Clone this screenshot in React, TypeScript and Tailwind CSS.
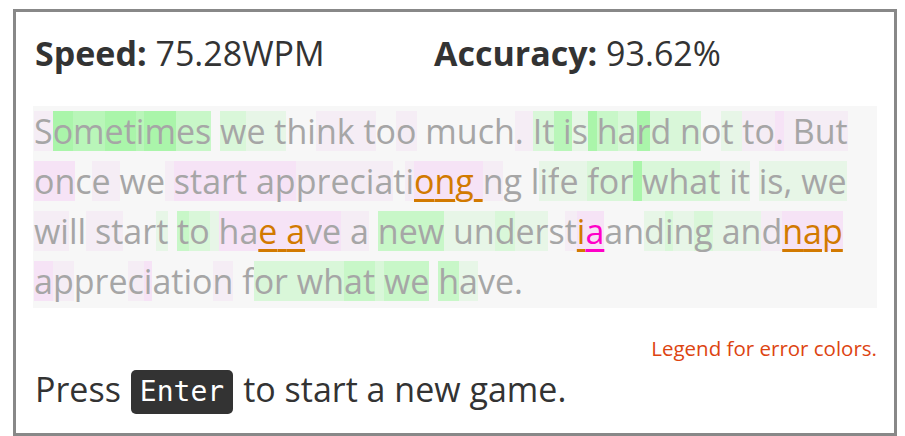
import React from "react";

type Seg = { t: string; c: string; e?: "o" | "m" };

const BG: Record<string, string> = {
  G: "bg-[#aaf5aa]",
  M: "bg-[#b9f6b9]",
  g: "bg-[#c8f7c8]",
  l: "bg-[#d9f7d9]",
  v: "bg-[#e7f6e7]",
  P: "bg-[#f6e3f6]",
  p: "bg-[#f5edf5]",
  ".": "",
};

const lines: Seg[][] = [
  [
    { t: "Sometimes", c: "pGMGGMGgg" },
    { t: " ", c: "." },
    { t: "we", c: "lv" },
    { t: " ", c: "v" },
    { t: "think", c: "v..pp" },
    { t: " ", c: "p" },
    { t: "too", c: "p.p" },
    { t: " ", c: "." },
    { t: "much.", c: "....p" },
    { t: " ", c: "p" },
    { t: "It", c: "ll" },
    { t: " ", c: "M" },
    { t: "is", c: "Mv" },
    { t: " ", c: "G" },
    { t: "hard", c: "glGl" },
    { t: " ", c: "l" },
    { t: "not", c: "l.v" },
    { t: " ", c: "v" },
    { t: "to.", c: "ppP" },
    { t: " ", c: "p" },
    { t: "But", c: "ppp" },
  ],
  [
    { t: "once", c: "PP.p" },
    { t: " ", c: "p" },
    { t: "we", c: ".." },
    { t: " ", c: "p" },
    { t: "start", c: "PPPPP" },
    { t: " ", c: "P" },
    { t: "appreciati", c: "PPpppppp.p" },
    { t: "ong ", c: "PPPP", e: "o" },
    { t: "ng", c: "p." },
    { t: " ", c: "." },
    { t: "life", c: ".vvv" },
    { t: " ", c: "v" },
    { t: "for", c: "lll" },
    { t: " ", c: "G" },
    { t: "what", c: "llll" },
    { t: " ", c: "v" },
    { t: "it", c: "vv" },
    { t: " ", c: "." },
    { t: "is,", c: "vvv" },
    { t: " ", c: "v" },
    { t: "we", c: "vv" },
  ],
  [
    { t: "will", c: "pp.." },
    { t: " ", c: "p" },
    { t: "start", c: "pp..v" },
    { t: " ", c: "." },
    { t: "to", c: "gl" },
    { t: " ", c: "v" },
    { t: "ha", c: "PP" },
    { t: "e a", c: "PPP", e: "o" },
    { t: "ve", c: "PP" },
    { t: " ", c: "p" },
    { t: "a", c: "p" },
    { t: " ", c: "." },
    { t: "new", c: "ggg" },
    { t: " ", c: "v" },
    { t: "underst", c: "vvlvv.p" },
    { t: "i", c: "P", e: "o" },
    { t: "a", c: "P", e: "m" },
    { t: "anding", c: "..vlvl" },
    { t: " ", c: "v" },
    { t: "and", c: "vvp" },
    { t: "nap", c: "PPP", e: "o" },
  ],
  [
    { t: "appreciation", c: "Pp...pP....p" },
    { t: " ", c: "." },
    { t: "for", c: ".ll" },
    { t: " ", c: "l" },
    { t: "what", c: "llgg" },
    { t: " ", c: "l" },
    { t: "we", c: "gg" },
    { t: " ", c: "." },
    { t: "have.", c: "gv..." },
  ],
];

function Line({ segs }: { segs: Seg[] }) {
  const chars: React.ReactNode[] = [];
  let k = 0;
  segs.forEach((s) => {
    for (let i = 0; i < s.t.length; i++) {
      const code = s.c[i] || ".";
      const color =
        s.e === "o"
          ? "text-[#d27a00] underline decoration-[3px] underline-offset-[5px]"
          : s.e === "m"
          ? "text-[#ff00c8] underline decoration-[3px] underline-offset-[5px]"
          : "text-[#a6a6a6]";
      chars.push(
        <span
          key={k++}
          className={`inline-block h-[40px] leading-[40px] whitespace-pre ${BG[code]} ${color}`}
        >
          {s.t[i]}
        </span>
      );
    }
  });
  return <div className="flex h-[50px] items-center whitespace-pre">{chars}</div>;
}

export default function App() {
  return (
    <div
      className="bg-white w-[905px] h-[436px] overflow-hidden pt-[9px] pl-[13px]"
      style={{ fontFamily: '"Open Sans", sans-serif' }}
    >
      <div className="w-[884px] h-[427px] border-[3px] border-[#888888] px-[17px] pt-[21px] text-[#333333]">
        <div className="flex h-[40px] items-center text-[34px] leading-[40px]">
          <div className="w-[401px] pl-[2px]">
            <span className="font-bold">Speed:</span> 75.28WPM
          </div>
          <div>
            <span className="font-bold">Accuracy:</span> 93.62%
          </div>
        </div>
        <div className="mt-[33px] h-[202px] bg-[#f7f7f7] pl-[1px] text-[34px]">
          {lines.map((l, i) => (
            <Line key={i} segs={l} />
          ))}
        </div>
        <div className="mt-[28px] text-right text-[20.5px] leading-[24px] text-[#dd4411]">
          Legend for error colors.
        </div>
        <div className="mt-[10px] flex h-[44px] items-start text-[34px] pl-[2px]">
          <span className="leading-[38px]">Press</span>
          <span
            className="mx-[10px] inline-flex h-[44px] items-center rounded-[5px] bg-[#333333] px-[9px] text-[28px] leading-[44px] text-white"
            style={{ fontFamily: '"DejaVu Sans Mono", monospace' }}
          >
            Enter
          </span>
          <span className="leading-[38px]">to start a new game.</span>
        </div>
      </div>
    </div>
  );
}
